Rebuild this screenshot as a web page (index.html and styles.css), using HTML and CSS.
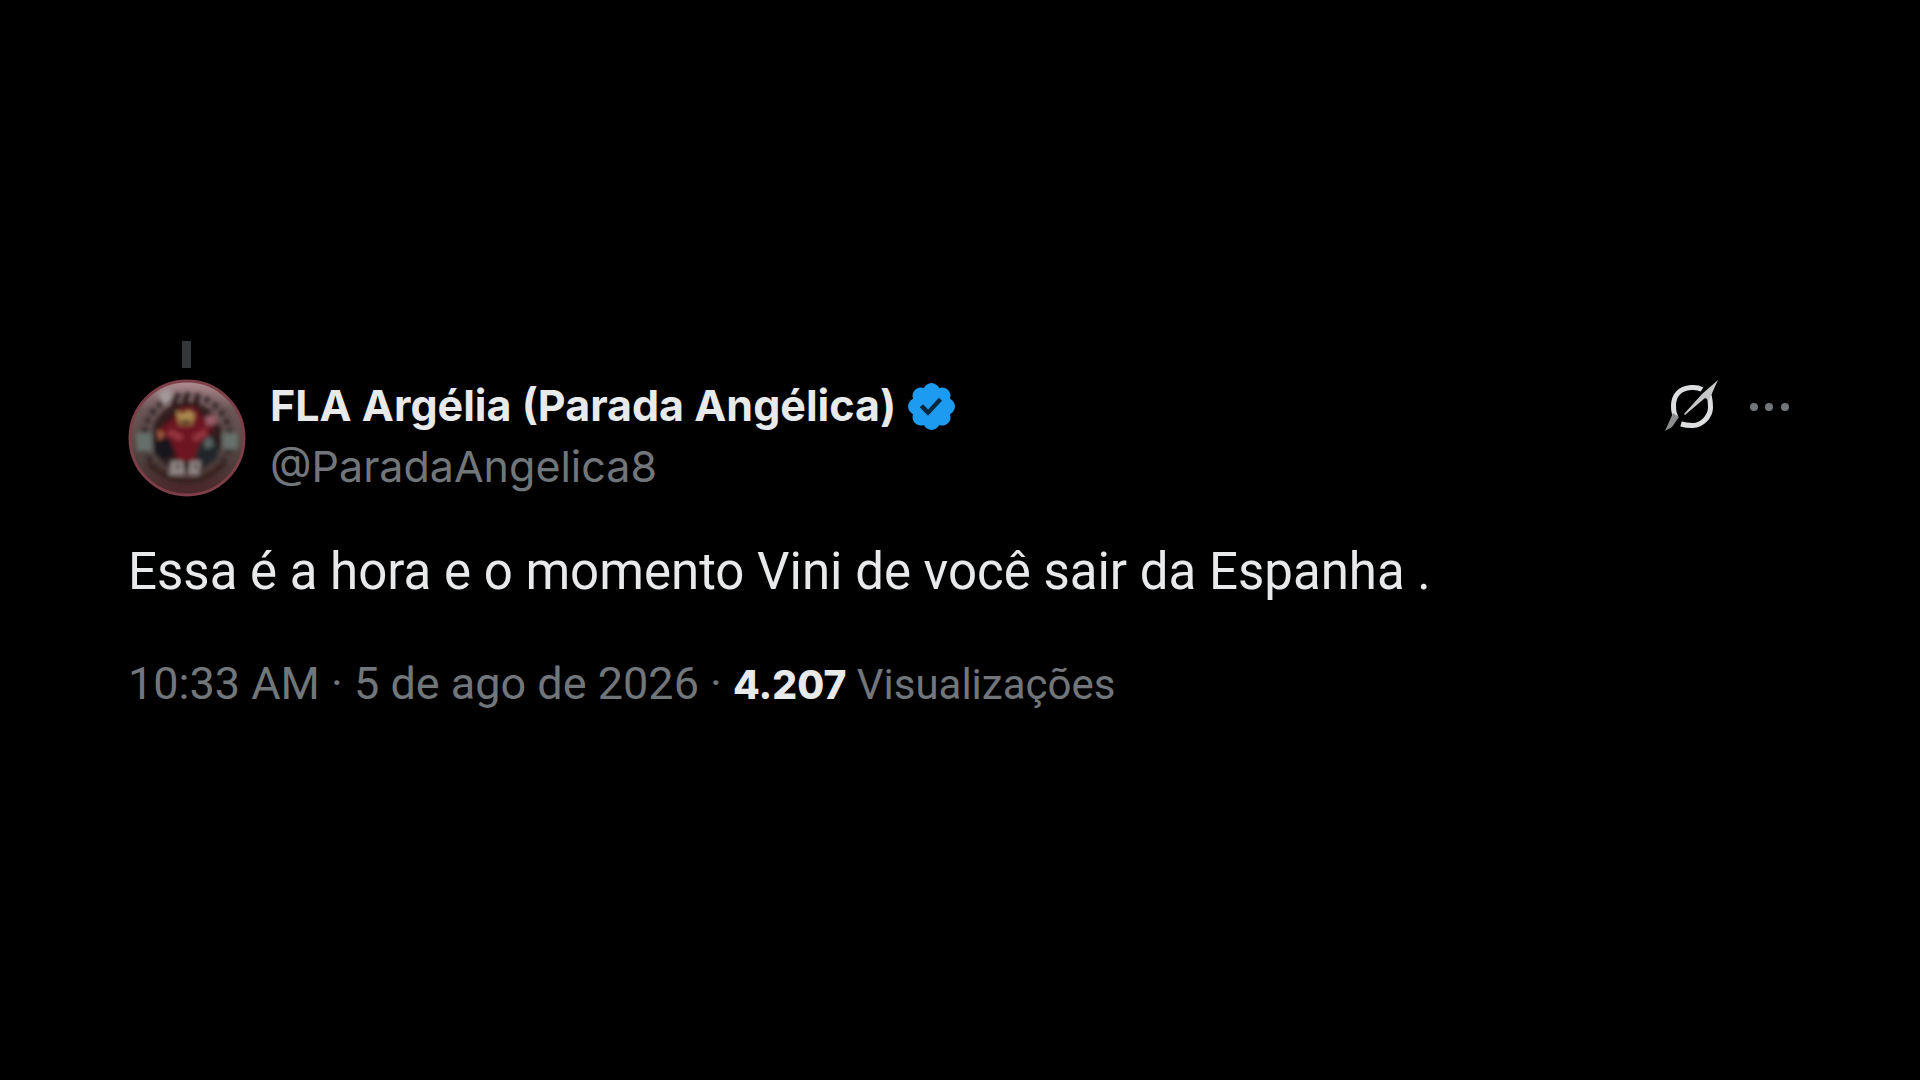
FILE: index.html
```html
<!DOCTYPE html>
<html lang="pt-BR">
<head>
    <meta charset="UTF-8">
    <meta name="viewport" content="width=device-width, initial-scale=1.0">
    <title>FLA Argélia (Parada Angélica)</title>

    <link rel="stylesheet" href="styles.css">
</head>
<body>
    <main class="page">
        <article class="post">
            <div class="thread-line"></div>

            <header class="post-header">
                <a class="avatar" href="#" aria-label="Perfil">
                    <svg viewBox="0 0 118 118">
                        <defs>
                            <radialGradient id="center" cx="50%" cy="45%" r="50%">
                                <stop offset="0" stop-color="#5c161e"/>
                                <stop offset="0.6" stop-color="#3a1719"/>
                                <stop offset="1" stop-color="#2c2021"/>
                            </radialGradient>
                            <linearGradient id="ring" x1="0" y1="0" x2="0" y2="1">
                                <stop offset="0" stop-color="#b08c90"/>
                                <stop offset="0.25" stop-color="#6b5656"/>
                                <stop offset="0.7" stop-color="#4e403d"/>
                                <stop offset="1" stop-color="#4a2426"/>
                            </linearGradient>
                            <filter id="soft">
                                <feGaussianBlur stdDeviation="2.2"/>
                            </filter>
                        </defs>
                        <circle cx="59" cy="59" r="57" fill="url(#ring)" stroke="#7d3f47" stroke-width="3"/>
                        <g filter="url(#soft)">
                            <circle cx="59" cy="59" r="43" fill="none" stroke="#352829" stroke-width="6" stroke-dasharray="6 4"/>
                            <path d="M8 54h16v18H9zM94 54h16v16H95z" fill="#66706c"/>
                            <path d="M30 14l12-5 2 11-8 6z" fill="#a39a9c"/>
                            <circle cx="59" cy="58" r="35" fill="url(#center)"/>
                            <path d="M45 40l8-12h14l8 12 12 4-10 18-8 20H50L42 62 32 50z" fill="#6d1821"/>
                            <path d="M44 18h5v9h-5zM55 17h5v9h-5zM66 18h5v9h-5z" fill="#2a1416"/>
                            <path d="M48 31l7 4 5-4 7 4-3 11H51z" fill="#ab8a50"/>
                            <path d="M52 41h11v4H52z" fill="#4a2b1a"/>
                            <path d="M43 50l13 7-4 5-13-6zM77 50l-13 7 3 6 12-7z" fill="#963641"/>
                            <path d="M77 38l10-3 3 9-11 3z" fill="#985d66"/>
                            <path d="M29 50l8 5-6 7z" fill="#a55c42"/>
                            <path d="M28 62l14-2 6 14-12 7-10-8z" fill="#17191a"/>
                            <path d="M72 64l10-8 9 10-3 15-13 6-8-10z" fill="#20282c"/>
                            <path d="M76 62l6-5 4 10-9 3z" fill="#5a6462"/>
                            <path d="M43 82h12l2 14H41zM62 82h11l-2 14H60z" fill="#8f8685"/>
                            <path d="M48 85h3v5h-3zM66 85h3v5h-3z" fill="#3a2929"/>
                            <path d="M20 84q39 38 77 0" fill="none" stroke="#38201f" stroke-width="5"/>
                        </g>
                    </svg>
                </a>

                <div class="author">
                    <div class="name-row">
                        <a class="name" href="#">FLA Argélia (Parada Angélica)</a>
                        <svg class="badge" viewBox="0 0 22 22" role="img" aria-label="Conta verificada">
                            <path fill="#1d9bf0" d="M20.396 11c-.018-.646-.215-1.275-.57-1.816-.354-.54-.852-.972-1.438-1.246.223-.607.27-1.264.14-1.897-.131-.634-.437-1.218-.882-1.687-.47-.445-1.053-.75-1.687-.882-.633-.13-1.29-.083-1.897.14-.273-.587-.704-1.086-1.245-1.44S11.647 1.62 11 1.604c-.646.017-1.273.213-1.813.568s-.969.854-1.24 1.44c-.608-.223-1.267-.272-1.902-.14-.635.13-1.22.436-1.69.882-.445.47-.749 1.055-.878 1.688-.13.633-.08 1.29.144 1.896-.587.274-1.087.705-1.443 1.245-.356.54-.555 1.17-.574 1.817.02.647.218 1.276.574 1.817.356.54.856.972 1.443 1.245-.224.606-.274 1.263-.144 1.896.13.634.433 1.218.877 1.688.47.443 1.054.747 1.687.878.633.132 1.29.084 1.897-.136.274.586.705 1.084 1.246 1.439.54.354 1.17.551 1.816.569.647-.016 1.276-.213 1.817-.567s.972-.854 1.245-1.44c.604.239 1.266.296 1.903.164.636-.132 1.22-.447 1.68-.907.46-.46.776-1.044.908-1.681s.075-1.299-.165-1.903c.586-.274 1.084-.705 1.439-1.246.354-.54.551-1.17.569-1.816z"/>
                            <path fill="#06263d" d="M9.600 14.700l-3.300-3.400 1.300-1.200 2.050 2.100 4.300-4.700 1.250 1.150z"/>
                        </svg>
                    </div>
                    <a class="handle" href="#">@ParadaAngelica8</a>
                </div>

                <div class="actions">
                    <button class="icon-button" type="button" aria-label="Explicar este post">
                        <svg class="grok" viewBox="0 0 56 56">
                            <path fill="none" stroke="#dcdedf" stroke-width="5" d="M38 10.500Q34 8 27 8.500C15 9.500 9.500 17 9.500 27C9.500 32 10 35 12 38"/>
                            <path fill="none" stroke="#dcdedf" stroke-width="5" d="M17 45Q22 46.500 29 46.500C38 46 46 38 46.500 29Q46.500 20 44.500 15"/>
                            <path fill="#c4c6c7" d="M54 1L45 21l-4-2-20 17-1-1 18-20z"/>
                            <path fill="#8b8d8e" d="M9 34l6 4-7 10-7 4z"/>
                        </svg>
                    </button>
                    <button class="icon-button" type="button" aria-label="Mais">
                        <svg class="dots" viewBox="0 0 44 56" fill="#71767b">
                            <circle cx="6" cy="28" r="4"/>
                            <circle cx="21" cy="28" r="4"/>
                            <circle cx="37" cy="28" r="4"/>
                        </svg>
                    </button>
                </div>
            </header>

            <p class="post-content">Essa é a hora e o momento Vini de você sair da Espanha .</p>

            <footer class="post-meta">
                <a href="#"><time datetime="2026-08-05T10:33">10:33 AM · 5 de ago de 2026</time></a>
                <span>·</span>
                <a class="views" href="#"><strong>4.207</strong> Visualizações</a>
            </footer>
        </article>
    </main>
</body>
</html>
```
FILE: styles.css
```css
* {
    box-sizing: border-box;
}
body {
    margin: 0;
    background-color: #000;
    color: #e7e9ea;
    font-family: Roboto, "Liberation Sans", sans-serif;
}
a {
    color: inherit;
    text-decoration: none;
}
a:hover {
    text-decoration: underline;
}
svg {
    display: block;
}
.page {
    min-height: 100vh;
    display: flex;
    flex-direction: column;
    justify-content: center;
    padding: 0 128px 24px;
}
.post {
    width: 100%;
}
.thread-line {
    width: 9px;
    height: 27px;
    margin: 0 0 11px 54px;
    background-color: #333639;
}
.post-header {
    display: flex;
    align-items: flex-start;
    gap: 24px;
}
.avatar svg {
    width: 118px;
    height: 118px;
}
.author {
    flex: 1;
    font-family: Inter, Roboto, sans-serif;
}
.name-row {
    display: flex;
    align-items: flex-start;
    gap: 8px;
}
.name {
    font-size: 43px;
    font-weight: 700;
    line-height: 52px;
}
.badge {
    width: 55px;
    height: 55px;
}
.handle {
    display: inline-block;
    color: #71767b;
    font-size: 43px;
    line-height: 64px;
}
.actions {
    display: flex;
    gap: 28px;
}
.icon-button {
    background: none;
    border: none;
    padding: 0;
    cursor: pointer;
}
.grok {
    width: 56px;
    height: 56px;
}
.dots {
    width: 44px;
    height: 56px;
}
.post-content {
    margin: 40px 0 48px;
    font-size: 51px;
    line-height: 68px;
}
.post-meta {
    color: #71767b;
    font-size: 45px;
    line-height: 60px;
}
.views {
    font-size: 42px;
}
.views strong {
    color: #e7e9ea;
    font-family: Inter, Roboto, sans-serif;
    font-size: 39px;
    font-weight: 800;
}
```
